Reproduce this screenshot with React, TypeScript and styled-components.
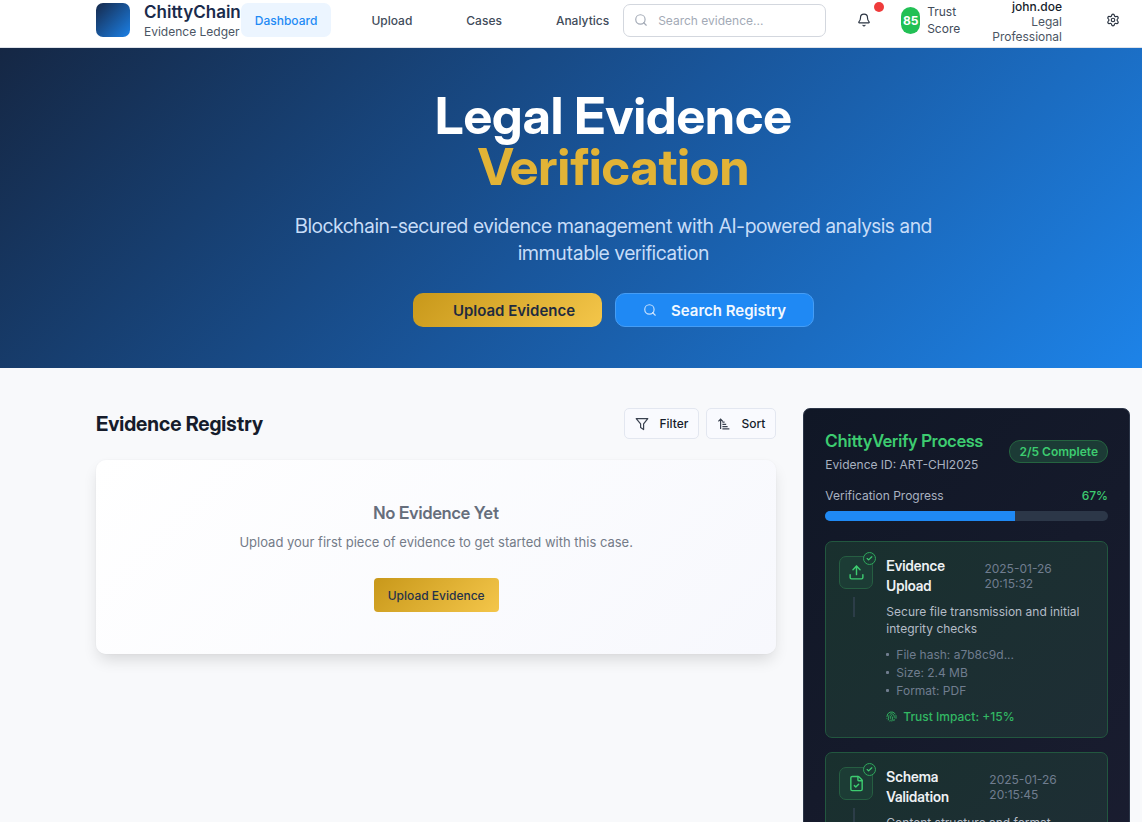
import React from "react";
import styled, { createGlobalStyle } from "styled-components";
import { Bell, Search, Settings, Upload, FileCheck, Fingerprint, Check } from "lucide-react";

const display = `"Inter Display", Inter, "Liberation Sans", sans-serif`;

const Global = createGlobalStyle`
  *, *::before, *::after { box-sizing: border-box; }
  html, body { margin: 0; padding: 0; }
  body {
    font-family: Inter, "Liberation Sans", sans-serif;
    font-size: 12px;
    line-height: 17px;
    color: #161c2b;
    background: #f8f9fb;
    overflow: hidden;
  }
  h1, h2, h3, h4, p, ul { margin: 0; padding: 0; }
  button, input { font-family: inherit; }
  button { cursor: pointer; }
`;

const Page = styled.div`
  height: 100vh;
  overflow: hidden;
`;

const Header = styled.header`
  display: flex;
  align-items: center;
  height: 48px;
  padding: 0 12px 7px 96px;
  background: #fff;
  border-bottom: 1px solid #dfe3ea;
`;

const Brand = styled.a`
  display: flex;
  align-items: center;
  gap: 14px;
  color: #1a2b4b;
  text-decoration: none;
`;

const LogoMark = styled.span`
  width: 34px;
  height: 34px;
  border-radius: 7px;
  background: linear-gradient(135deg, #16294b 0%, #1b80e6 100%);
`;

const BrandName = styled.strong`
  display: block;
  font-size: 17px;
  line-height: 24px;
  font-weight: 600;
`;

const BrandSub = styled.span`
  display: block;
  line-height: 15px;
  padding-bottom: 2px;
  color: #4b5563;
`;

const Nav = styled.nav`
  display: flex;
  gap: 26px;
`;

const NavLink = styled.a<{ $active?: boolean }>`
  padding: 9px 14px 8px;
  border-radius: 7px;
  font-weight: 500;
  text-decoration: none;
  color: ${(p) => (p.$active ? "#1e8af5" : "#414b5a")};
  background: ${(p) => (p.$active ? "#ecf5ff" : "transparent")};
`;

const SearchBox = styled.label`
  display: flex;
  align-items: center;
  gap: 10px;
  width: 203px;
  height: 33px;
  padding: 0 10px;
  border: 1px solid #d3d7de;
  border-radius: 7px;
  color: #a3aab6;
`;

const SearchInput = styled.input`
  flex: 1;
  min-width: 0;
  padding: 0;
  border: 0;
  outline: 0;
  background: transparent;
  font-size: 12px;
  color: #161c2b;
  &::placeholder { color: #a3aab6; opacity: 1; }
`;

const Tools = styled.div`
  flex: 1;
  display: flex;
  align-items: center;
  gap: 20px;
  padding-left: 21px;
`;

const IconButton = styled.button`
  position: relative;
  display: grid;
  place-items: center;
  width: 34px;
  height: 34px;
  padding: 0;
  border: 0;
  background: transparent;
  color: #2b3442;
`;

const Dot = styled.span`
  position: absolute;
  top: -1px;
  right: -3px;
  width: 10px;
  height: 10px;
  border-radius: 50%;
  background: #ef3b3b;
`;

const Trust = styled.div`
  display: flex;
  align-items: center;
  gap: 7px;
  color: #414b5a;
`;

const TrustValue = styled.span`
  width: 19px;
  border-radius: 10px;
  background: #22c055;
  color: #fff;
  font-weight: 700;
  line-height: 27px;
  text-align: center;
`;

const Narrow = styled.span`
  width: min-content;
`;

const User = styled.div`
  width: min-content;
  margin: 0 14px 0 auto;
  padding-top: 3px;
  line-height: 15px;
  text-align: right;
  color: #4b5563;
  strong { display: block; font-weight: 500; color: #161c2b; }
`;

const Hero = styled.section`
  display: flex;
  flex-direction: column;
  align-items: center;
  min-height: 320px;
  padding: 42px 12px 41px 97px;
  text-align: center;
  background: linear-gradient(135deg, #152744 0%, #19559a 50%, #1d83e8 100%);
`;

const HeroTitle = styled.h1`
  font-family: ${display};
  font-size: 51px;
  line-height: 51px;
  font-weight: 700;
  color: #fff;
  span { display: block; color: #e2b336; }
`;

const HeroText = styled.p`
  max-width: 660px;
  margin-top: 21px;
  font-family: ${display};
  font-size: 20px;
  line-height: 27px;
  color: #c8ddf8;
`;

const HeroActions = styled.div`
  display: flex;
  gap: 13px;
  margin-top: 26px;
`;

const HeroButton = styled.button<{ $gold?: boolean }>`
  display: flex;
  align-items: center;
  gap: 14px;
  height: 34px;
  padding: ${(p) => (p.$gold ? "0 27px 0 40px" : "0 27px")};
  border: ${(p) => (p.$gold ? "0" : "1px solid #459df5")};
  border-radius: 10px;
  font-size: 15px;
  font-weight: 600;
  color: ${(p) => (p.$gold ? "#1f2b3f" : "#f2f8ff")};
  background: ${(p) => (p.$gold ? "linear-gradient(135deg, #c8981a, #f4c64a)" : "#1f89f4")};
`;

const Main = styled.main`
  display: grid;
  grid-template-columns: repeat(3, minmax(0, 1fr));
  align-items: start;
  gap: 27px;
  padding: 40px 12px 0 96px;
`;

const Registry = styled.section`
  grid-column: span 2;
`;

const RegistryHead = styled.div`
  display: flex;
  align-items: center;
  gap: 7px;
  h2 { flex: 1; font-family: ${display}; font-size: 20px; line-height: 28px; font-weight: 700; }
`;

const SmallButton = styled.button`
  display: flex;
  align-items: center;
  gap: 10px;
  height: 31px;
  padding: 0 10px;
  border: 1px solid #e3e7f0;
  border-radius: 5px;
  background: #f9fafe;
  font-size: 12px;
  font-weight: 500;
  color: #161c2b;
`;

const Empty = styled.div`
  display: flex;
  flex-direction: column;
  align-items: center;
  margin-top: 21px;
  padding: 41px 42px 42px;
  border-radius: 10px;
  background: linear-gradient(135deg, #fff, #f7f8fd);
  box-shadow: 0 8px 16px -3px rgba(0, 0, 0, 0.14), 0 0 2px rgba(0, 0, 0, 0.06);
  h3 { font-family: ${display}; font-size: 17px; line-height: 24px; font-weight: 600; color: #666e7c; }
  p { margin-top: 7px; font-size: 13px; line-height: 20px; color: #747b88; }
`;

const GoldButton = styled.button`
  height: 34px;
  margin-top: 26px;
  padding: 0 14px;
  border: 0;
  border-radius: 4px;
  background: linear-gradient(135deg, #c8981a, #f4c64a);
  font-size: 12px;
  font-weight: 500;
  color: #26324a;
`;

const Verify = styled.aside`
  padding: 20px 21px;
  border: 1px solid #2c3648;
  border-radius: 7px;
  background: linear-gradient(135deg, #101726, #1a1d30);
  color: #a9b2c0;
`;

const VerifyHead = styled.div`
  display: flex;
  align-items: center;
  justify-content: space-between;
  h2 { font-family: ${display}; font-size: 17px; line-height: 24px; font-weight: 600; color: #3dcc70; }
  p { margin-top: 3px; }
`;

const Pill = styled.span`
  padding: 1px 9px;
  border: 1px solid #256440;
  border-radius: 11px;
  line-height: 19px;
  background: #1c3b36;
  color: #3dcc70;
  font-weight: 600;
`;

const ProgressHead = styled.div`
  display: flex;
  justify-content: space-between;
  margin-top: 14px;
  span:last-child { color: #3dcc70; font-weight: 500; }
`;

const Track = styled.div`
  height: 10px;
  margin: 7px 0 20px;
  border-radius: 5px;
  overflow: hidden;
  background: #2c3748;
`;

const Fill = styled.div`
  height: 100%;
  background: #1f89f4;
`;

const Step = styled.article`
  display: flex;
  gap: 13px;
  margin-bottom: 14px;
  padding: 14px 13px 13px;
  border: 1px solid #22573f;
  border-radius: 7px;
  background: linear-gradient(135deg, #19302e, #1e2e35);
`;

const StepSide = styled.div`
  flex: none;
`;

const StepIcon = styled.div`
  position: relative;
  display: grid;
  place-items: center;
  width: 34px;
  height: 33px;
  border: 1px solid #265e42;
  border-radius: 7px;
  background: #1c3c35;
  color: #3dcc70;
`;

const StepCheck = styled.span`
  position: absolute;
  top: -5px;
  right: -4px;
  display: grid;
  place-items: center;
  width: 13px;
  height: 13px;
  border: 1px solid #2fa65c;
  border-radius: 50%;
  background: #1b3a34;
`;

const Connector = styled.div`
  width: 2px;
  height: 20px;
  margin: 8px 0 0 14px;
  background: #2c3d48;
`;

const StepBody = styled.div`
  flex: 1;
  min-width: 0;
`;

const StepHead = styled.div`
  display: flex;
  align-items: center;
  justify-content: space-between;
  h3 { font-family: ${display}; font-size: 14px; line-height: 20px; font-weight: 600; color: #eef1f4; }
  time { line-height: 15px; color: #707d8f; }
`;

const StepText = styled.p`
  margin-top: 7px;
  color: #b4bcc7;
`;

const Details = styled.ul`
  display: grid;
  gap: 3px;
  margin-top: 10px;
  list-style: none;
  line-height: 15px;
  color: #707d8f;
  li { display: flex; align-items: center; gap: 7px; }
  li::before { content: ""; width: 3px; height: 3px; border-radius: 1px; background: #707d8f; }
`;

const Impact = styled.div`
  display: flex;
  align-items: center;
  gap: 6px;
  margin-top: 11px;
  line-height: 15px;
  font-weight: 500;
  color: #32b863;
`;

const FunnelIcon = () => (
  <svg width="14" height="14" viewBox="0 0 14 14" fill="none" stroke="#3a4250" strokeWidth="1.2" strokeLinejoin="round">
    <path d="M1.2 1.6h11.6L8.6 6.9v5.7L5.6 10.5V6.9z" />
  </svg>
);

const SortIcon = () => (
  <svg width="14" height="14" viewBox="0 0 14 14" fill="none" stroke="#3a4250" strokeWidth="1.2">
    <path d="M3.6 12V2.2M1.4 4.4L3.6 2.2 5.8 4.4M5.4 5.2h2.2M5.4 7.4h3.8M5.4 9.6h5.2M5.4 11.8h7" />
  </svg>
);

const navItems = ["Dashboard", "Upload", "Cases", "Analytics"];

const steps = [
  {
    title: "Evidence Upload",
    time: "2025-01-26 20:15:32",
    text: "Secure file transmission and initial integrity checks",
    details: ["File hash: a7b8c9d...", "Size: 2.4 MB", "Format: PDF"],
    impact: "+15%",
    Icon: Upload,
  },
  {
    title: "Schema Validation",
    time: "2025-01-26 20:15:45",
    text: "Content structure and format",
    details: [],
    impact: "",
    Icon: FileCheck,
  },
];

export default function App() {
  const progress = 67;
  return (
    <Page>
      <Global />
      <Header>
        <Brand href="#">
          <LogoMark />
          <span>
            <BrandName>ChittyChain</BrandName>
            <BrandSub>Evidence Ledger</BrandSub>
          </span>
        </Brand>
        <Nav>
          {navItems.map((n, i) => (
            <NavLink key={n} href="#" $active={i === 0}>{n}</NavLink>
          ))}
        </Nav>
        <SearchBox>
          <Search size={14} />
          <SearchInput type="search" placeholder="Search evidence..." aria-label="Search evidence" />
        </SearchBox>
        <Tools>
          <IconButton aria-label="Notifications"><Bell size={14} /><Dot /></IconButton>
          <Trust><TrustValue>85</TrustValue><Narrow>Trust Score</Narrow></Trust>
          <User><strong>john.doe</strong>Legal Professional</User>
          <IconButton aria-label="Settings"><Settings size={14} /></IconButton>
        </Tools>
      </Header>
      <Hero>
        <HeroTitle>Legal Evidence<span>Verification</span></HeroTitle>
        <HeroText>Blockchain-secured evidence management with AI-powered analysis and immutable verification</HeroText>
        <HeroActions>
          <HeroButton $gold>Upload Evidence</HeroButton>
          <HeroButton><Search size={14} strokeOpacity={0.8} />Search Registry</HeroButton>
        </HeroActions>
      </Hero>
      <Main>
        <Registry>
          <RegistryHead>
            <h2>Evidence Registry</h2>
            <SmallButton><FunnelIcon />Filter</SmallButton>
            <SmallButton><SortIcon />Sort</SmallButton>
          </RegistryHead>
          <Empty>
            <h3>No Evidence Yet</h3>
            <p>Upload your first piece of evidence to get started with this case.</p>
            <GoldButton>Upload Evidence</GoldButton>
          </Empty>
        </Registry>
        <Verify>
          <VerifyHead>
            <div>
              <h2>ChittyVerify Process</h2>
              <p>Evidence ID: ART-CHI2025</p>
            </div>
            <Pill>2/5 Complete</Pill>
          </VerifyHead>
          <ProgressHead><span>Verification Progress</span><span>{progress}%</span></ProgressHead>
          <Track><Fill style={{ width: `${progress}%` }} /></Track>
          {steps.map(({ Icon, ...s }) => (
            <Step key={s.title}>
              <StepSide>
                <StepIcon>
                  <Icon size={17} />
                  <StepCheck><Check size={7} strokeWidth={4} /></StepCheck>
                </StepIcon>
                <Connector />
              </StepSide>
              <StepBody>
                <StepHead><h3>{s.title}</h3><time>{s.time}</time></StepHead>
                <StepText>{s.text}</StepText>
                {s.details.length > 0 && <Details>{s.details.map((d) => <li key={d}>{d}</li>)}</Details>}
                {s.impact && <Impact><Fingerprint size={11} />Trust Impact: {s.impact}</Impact>}
              </StepBody>
            </Step>
          ))}
        </Verify>
      </Main>
    </Page>
  );
}
